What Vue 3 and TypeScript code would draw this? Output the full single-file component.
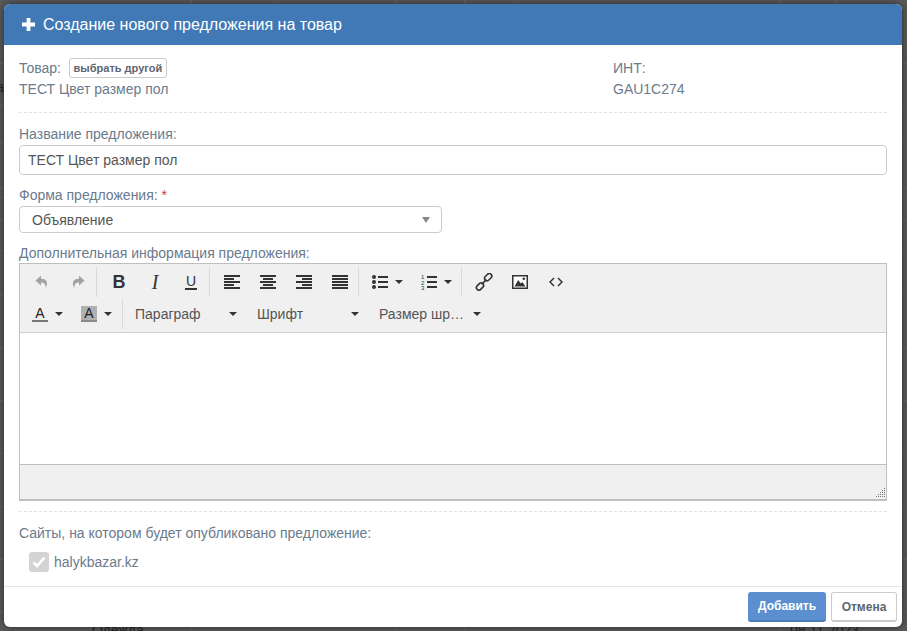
<script setup lang="ts">
const hLines: number[] = [63, 105, 142, 188, 197, 219, 250, 294, 347, 400, 453, 506, 559, 612]
const vLines: number[] = [191, 277, 395, 464, 517, 780, 835]
const alignBars: Record<string, number[][]> = {
  left: [[0, 16], [0, 10], [0, 16], [0, 10], [0, 16]],
  center: [[0, 16], [3, 10], [0, 16], [3, 10], [0, 16]],
  right: [[0, 16], [6, 10], [0, 16], [6, 10], [0, 16]],
  justify: [[0, 16], [0, 16], [0, 16], [0, 16], [0, 16]],
}
const alignNames: string[] = ['left', 'center', 'right', 'justify']
const lists: string[] = ['Параграф', 'Шрифт', 'Размер шр…']
</script>

<template>
  <div class="page">
    <div class="backdrop" aria-hidden="true">
      <i v-for="y in hLines" :key="'h' + y" class="hline" :style="{ top: y + 'px' }"></i>
      <i v-for="x in vLines" :key="'v' + x" class="vline" :style="{ left: x + 'px' }"></i>
      <span class="bg-text bg-a">а</span>
      <span class="bg-text bg-cat">Одежда</span>
      <span class="bg-text bg-date">08.11.2023</span>
    </div>

    <div class="modal">
      <header class="head">
        <svg class="plus" width="13" height="13" viewBox="0 0 13 13"><path d="M4.6 0h3.8v4.6H13v3.8H8.4V13H4.6V8.4H0V4.6h4.6z" fill="#fff"/></svg>
        <h1 class="title">Создание нового предложения на товар</h1>
      </header>

      <div class="body">
        <section class="product">
          <div class="prod-left">
            <div class="prod-line">Товар: <button class="pick" type="button">выбрать другой</button></div>
            <div class="prod-val">ТЕСТ Цвет размер пол</div>
          </div>
          <div class="prod-right">
            <div class="prod-line">ИНТ:</div>
            <div class="prod-val">GAU1C274</div>
          </div>
        </section>

        <label class="lab lab-name">Название предложения:</label>
        <div class="input">ТЕСТ Цвет размер пол</div>

        <label class="lab lab-form">Форма предложения: <b class="req">*</b></label>
        <div class="select">
          <span>Объявление</span>
          <i class="sel-caret"></i>
        </div>

        <label class="lab lab-extra">Дополнительная информация предложения:</label>
        <div class="editor">
          <div class="toolbar">
            <div class="row">
              <div class="grp first">
                <span class="btn">
                  <svg width="16" height="16" viewBox="0 0 16 16"><path d="M7 1.5 1.5 6.7 7 11.5V8.6c3 0 4.6 1.2 4.7 5.4 2.6-4.6 1.8-9.1-4.7-9.2z" fill="#a3a3a3"/></svg>
                </span>
                <span class="btn">
                  <svg width="16" height="16" viewBox="0 0 16 16"><path d="M9 1.5l5.5 5.2L9 11.5V8.6c-3 0-4.6 1.2-4.7 5.4C1.7 9.4 2.5 4.9 9 4.8z" fill="#a3a3a3"/></svg>
                </span>
              </div>
              <div class="grp">
                <span class="btn glyph bold">B</span>
                <span class="btn glyph ital">I</span>
                <span class="btn"><span class="under">U</span></span>
              </div>
              <div class="grp">
                <span v-for="name in alignNames" :key="name" class="btn">
                  <svg width="16" height="14" viewBox="0 0 16 14">
                    <rect v-for="(b, i) in alignBars[name]" :key="i" :x="b[0]" :y="i * 3" :width="b[1]" height="2" fill="#333"/>
                  </svg>
                </span>
              </div>
              <div class="grp">
                <span class="btn wide">
                  <svg width="16" height="16" viewBox="0 0 16 16">
                    <circle cx="2" cy="3" r="2" fill="#333"/><circle cx="2" cy="8" r="2" fill="#333"/><circle cx="2" cy="13" r="2" fill="#333"/>
                    <rect x="6" y="2" width="10" height="2" fill="#333"/><rect x="6" y="7" width="10" height="2" fill="#333"/><rect x="6" y="12" width="10" height="2" fill="#333"/>
                  </svg>
                  <i class="caret"></i>
                </span>
                <span class="btn wide">
                  <svg width="16" height="16" viewBox="0 0 16 16">
                    <text x="0" y="5" class="num">1</text><text x="0" y="10.5" class="num">2</text><text x="0" y="16" class="num">3</text>
                    <rect x="6" y="2" width="10" height="2" fill="#333"/><rect x="6" y="7" width="10" height="2" fill="#333"/><rect x="6" y="12" width="10" height="2" fill="#333"/>
                  </svg>
                  <i class="caret"></i>
                </span>
              </div>
              <div class="grp">
                <span class="btn">
                  <svg width="18" height="18" viewBox="0 0 18 18" fill="none" stroke="#333" stroke-width="1.6">
                    <rect x="9.2" y="1.6" width="8" height="5" rx="2.4" transform="rotate(-45 13.2 4.1)"/>
                    <rect x="1" y="11" width="8" height="5" rx="2.4" transform="rotate(-45 5 13.5)"/>
                    <path d="M6.6 11.4l4.8-4.8"/>
                  </svg>
                </span>
                <span class="btn">
                  <svg width="16" height="14" viewBox="0 0 16 14">
                    <rect x=".75" y=".75" width="14.5" height="12.5" fill="#fff" stroke="#333" stroke-width="1.5"/>
                    <path d="M2.5 11.5 6.2 5l2.6 3.6 1.5-1.5 3.2 4.4z" fill="#333"/>
                    <circle cx="11.8" cy="3.8" r="1.3" fill="#333"/>
                  </svg>
                </span>
                <span class="btn">
                  <svg width="14" height="10" viewBox="0 0 14 10" fill="none" stroke="#333" stroke-width="1.5"><path d="M5 1 1 5l4 4M9 1l4 4-4 4"/></svg>
                </span>
              </div>
            </div>
            <div class="row row2">
              <div class="grp first">
                <span class="btn wide color">
                  <span class="letter">A</span>
                  <i class="caret"></i>
                </span>
                <span class="btn wide color">
                  <span class="letter shade">A</span>
                  <i class="caret"></i>
                </span>
              </div>
              <div class="grp lists">
                <span v-for="l in lists" :key="l" class="listbox">
                  <span>{{ l }}</span>
                  <i class="caret"></i>
                </span>
              </div>
            </div>
          </div>
          <div class="edit-area"></div>
          <div class="status">
            <svg class="resize" width="10" height="10" viewBox="0 0 10 10" fill="#777">
              <rect x="8" y="0" width="1" height="1"/><rect x="6" y="2" width="1" height="1"/><rect x="8" y="2" width="1" height="1"/>
              <rect x="4" y="4" width="1" height="1"/><rect x="6" y="4" width="1" height="1"/><rect x="8" y="4" width="1" height="1"/>
              <rect x="2" y="6" width="1" height="1"/><rect x="4" y="6" width="1" height="1"/><rect x="6" y="6" width="1" height="1"/><rect x="8" y="6" width="1" height="1"/>
              <rect x="0" y="8" width="1" height="1"/><rect x="2" y="8" width="1" height="1"/><rect x="4" y="8" width="1" height="1"/><rect x="6" y="8" width="1" height="1"/><rect x="8" y="8" width="1" height="1"/>
            </svg>
          </div>
        </div>

        <div class="sites">
          <div class="sites-label">Сайты, на котором будет опубликовано предложение:</div>
          <div class="site">
            <span class="check">
              <svg width="14" height="12" viewBox="0 0 14 12"><path d="M1.5 6.5 5 10l7.5-8.5" fill="none" stroke="#fff" stroke-width="2.6"/></svg>
            </span>
            <span>halykbazar.kz</span>
          </div>
        </div>
      </div>

      <footer class="foot">
        <button class="action primary" type="button">Добавить</button>
        <button class="action cancel" type="button">Отмена</button>
      </footer>
    </div>
  </div>
</template>

<style>
html, body { margin: 0; background: #5b5b5b; }
</style>

<style scoped>
.page {
  position: relative;
  width: 907px;
  height: 631px;
  box-sizing: border-box;
  padding: 4px 5px 4px 4px;
  overflow: hidden;
  background: #5b5b5b;
  font-family: "Liberation Sans", Arial, sans-serif;
  font-size: 14px;
  color: #6b7a8c;
}
.backdrop { position: absolute; inset: 0; }
.hline { position: absolute; left: 0; right: 0; height: 1px; background: #666; }
.vline { position: absolute; top: 0; bottom: 0; width: 1px; background: #666; }
.bg-text { position: absolute; color: #262626; font-size: 14px; line-height: 16px; }
.bg-a { left: -4px; top: 79px; }
.bg-cat { left: 92px; top: 622px; }
.bg-date { left: 790px; top: 622px; }

.modal {
  position: relative;
  height: 623px;
  display: flex;
  flex-direction: column;
  background: #fff;
  border-radius: 6px;
  box-shadow: 0 0 8px rgba(0, 0, 0, .55);
  overflow: hidden;
}
.head {
  height: 41px;
  flex: none;
  display: flex;
  align-items: center;
  padding-left: 18px;
  box-sizing: border-box;
  background: #4079b5;
}
.plus { margin-right: 8px; }
.title { margin: 0; font-size: 16px; font-weight: 400; color: #fff; line-height: 20px; }

.body { flex: 1; padding: 0 15px; display: flex; flex-direction: column; align-items: stretch; }
.product {
  display: flex;
  height: 68px;
  box-sizing: border-box;
  padding-top: 13px;
  border-bottom: 1px dashed #dfe2e6;
  flex: none;
  line-height: 20px;
}
.prod-left { width: 594px; }
.prod-line { height: 20px; display: flex; align-items: center; gap: 4px; white-space: pre; }
.prod-val { margin-top: 1px; }
.pick {
  height: 20px;
  width: 98px;
  padding: 0;
  margin-left: 0;
  background: #fff;
  border: 1px solid #ccc;
  border-radius: 3px;
  font: 700 11px "Liberation Sans", Arial, sans-serif;
  color: #5c6670;
}
.lab { display: block; line-height: 16px; flex: none; }
.lab-name { margin-top: 13px; }
.input {
  flex: none;
  height: 30px;
  margin-top: 3px;
  box-sizing: border-box;
  border: 1px solid #ccc;
  border-radius: 4px;
  padding: 0 8px;
  line-height: 28px;
  color: #555;
}
.lab-form { margin-top: 12px; }
.req { color: #d9343f; font-weight: 400; }
.select {
  flex: none;
  width: 423px;
  height: 27px;
  margin-top: 3px;
  box-sizing: border-box;
  border: 1px solid #ccc;
  border-radius: 4px;
  padding: 0 12px;
  display: flex;
  align-items: center;
  justify-content: space-between;
  color: #555;
}
.sel-caret {
  border-left: 4px solid transparent;
  border-right: 4px solid transparent;
  border-top: 6px solid #888;
  margin-top: 1px;
  margin-right: -1px;
}
.lab-extra { margin-top: 12px; }
.editor {
  flex: none;
  height: 238px;
  margin-top: 2px;
  box-sizing: border-box;
  border: 1px solid #bfbfbf;
  border-width: 1px 1px 2px;
  display: flex;
  flex-direction: column;
  background: #f0f0f0;
}
.toolbar {
  height: 69px;
  flex: none;
  box-sizing: border-box;
  border-bottom: 1px solid #cfcfcf;
  padding: 3px 0 0 4px;
}
.row { display: flex; height: 30px; margin-bottom: 2px; }
.row2 { height: 30px; }
.grp {
  display: flex;
  align-items: center;
  height: 30px;
  border-left: 1px solid #d9d9d9;
  padding-left: 4px;
  box-sizing: content-box;
}
.grp.first { border-left: 0; padding-left: 0; }
.btn {
  width: 36px;
  height: 30px;
  flex: none;
  display: flex;
  align-items: center;
  justify-content: center;
  color: #333;
}
.btn.wide { width: 49px; justify-content: flex-start; padding-left: 9px; box-sizing: border-box; }
.glyph { font-size: 18px; line-height: 18px; }
.bold { font-weight: 700; }
.ital { font-style: italic; font-family: "Liberation Serif", serif; font-size: 20px; }
.under { font-size: 14px; line-height: 13px; border-bottom: 2px solid #333; padding: 0 1px; }
.caret {
  display: block;
  border-left: 4px solid transparent;
  border-right: 4px solid transparent;
  border-top: 4px solid #333;
  margin-left: 7px;
}
.num { font: 6px "Liberation Sans", Arial, sans-serif; fill: #333; }
.color { padding-left: 8px !important; }
.letter {
  width: 16px;
  height: 16px;
  box-sizing: border-box;
  border-bottom: 2px solid #777;
  text-align: center;
  font-size: 14px;
  line-height: 14px;
  color: #222;
}
.shade { background: #b0b0b0; border-bottom-color: #8a8a8a; }
.lists { padding-left: 0; }
.listbox {
  width: 122px;
  height: 30px;
  box-sizing: border-box;
  padding-left: 12px;
  position: relative;
  display: flex;
  align-items: center;
  color: #555;
}
.listbox .caret { position: absolute; left: 106px; top: 13px; margin: 0; }
.edit-area { height: 131px; background: #fff; flex: none; border-bottom: 1px solid #bfbfbf; }
.status { flex: 1; position: relative; }
.resize { position: absolute; right: 0; bottom: 1px; }
.sites {
  margin-top: 10px;
  border-top: 1px dashed #dfe2e6;
  padding-top: 13px;
}
.sites-label { line-height: 16px; }
.site {
  margin-top: 11px;
  margin-left: 10px;
  display: flex;
  align-items: center;
  gap: 5px;
  height: 20px;
}
.check {
  width: 20px;
  height: 20px;
  border-radius: 3px;
  background: #d3d3d3;
  display: flex;
  align-items: center;
  justify-content: center;
}
.foot {
  height: 41px;
  flex: none;
  box-sizing: border-box;
  border-top: 1px solid #e5e5e5;
  display: flex;
  justify-content: flex-end;
  align-items: flex-start;
  padding: 5px 5px 0 0;
  gap: 5px;
}
.action {
  height: 30px;
  padding: 0;
  border-radius: 3px;
  font: 700 12px "Liberation Sans", Arial, sans-serif;
}
.primary {
  width: 78px;
  background: #5b8fcf;
  border: 0;
  border-bottom: 2px solid #4a7cb9;
  color: #fff;
}
.cancel {
  width: 66px;
  background: #fff;
  border: 1px solid #ccc;
  border-bottom-width: 2px;
  color: #5a6672;
}
</style>
